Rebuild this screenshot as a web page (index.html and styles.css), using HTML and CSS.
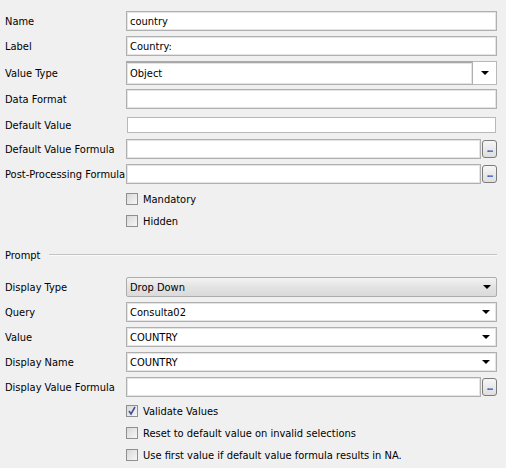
FILE: index.html
```html
<!DOCTYPE html>
<html lang="en">
<head>
  <meta charset="UTF-8">
  <title>Parameter</title>
  <link rel="stylesheet" href="styles.css">
</head>
<body>
  <div class="panel">
    <div class="row r-name">
      <span class="lbl">Name</span>
      <div class="field"><span class="txt">country</span></div>
    </div>
    <div class="row r-label">
      <span class="lbl">Label</span>
      <div class="field"><span class="txt">Country:</span></div>
    </div>
    <div class="row r-type">
      <span class="lbl">Value Type</span>
      <div class="combo">
        <div class="combo-text"><span class="txt">Object</span></div>
        <div class="combo-btn"><span class="arrow"></span></div>
      </div>
    </div>
    <div class="row r-format">
      <span class="lbl">Data Format</span>
      <div class="field"></div>
    </div>
    <div class="row r-default">
      <span class="lbl">Default Value</span>
      <div class="field thin"></div>
    </div>
    <div class="row r-formula">
      <span class="lbl">Default Value Formula</span>
      <div class="field"></div>
      <button class="dots">...</button>
    </div>
    <div class="row r-post">
      <span class="lbl">Post-Processing Formula</span>
      <div class="field"></div>
      <button class="dots">...</button>
    </div>
    <div class="row check r-mand">
      <span class="lbl"></span>
      <span class="box"></span><span class="ctext">Mandatory</span>
    </div>
    <div class="row check">
      <span class="lbl"></span>
      <span class="box"></span><span class="ctext">Hidden</span>
    </div>

    <div class="row section">
      <span class="sec-title">Prompt</span>
      <span class="sec-line"></span>
    </div>

    <div class="row r-display">
      <span class="lbl">Display Type</span>
      <div class="dropdown"><span class="txt">Drop Down</span><span class="arrow"></span></div>
    </div>
    <div class="row r-list">
      <span class="lbl">Query</span>
      <div class="field select"><span class="txt">Consulta02</span><span class="arrow"></span></div>
    </div>
    <div class="row r-list">
      <span class="lbl">Value</span>
      <div class="field select"><span class="txt">COUNTRY</span><span class="arrow"></span></div>
    </div>
    <div class="row r-list">
      <span class="lbl">Display Name</span>
      <div class="field select"><span class="txt">COUNTRY</span><span class="arrow"></span></div>
    </div>
    <div class="row r-list">
      <span class="lbl">Display Value Formula</span>
      <div class="field"></div>
      <button class="dots">...</button>
    </div>
    <div class="row check r-valid">
      <span class="lbl"></span>
      <span class="box checked">
        <svg width="10" height="10" viewBox="0 0 10 10"><path d="M2 5 L4 8 L8 1" fill="none" stroke="#3f4f9a" stroke-width="1.6"/></svg>
      </span><span class="ctext">Validate Values</span>
    </div>
    <div class="row check">
      <span class="lbl"></span>
      <span class="box"></span><span class="ctext">Reset to default value on invalid selections</span>
    </div>
    <div class="row check">
      <span class="lbl"></span>
      <span class="box"></span><span class="ctext">Use first value if default value formula results in NA.</span>
    </div>
  </div>
</body>
</html>
```

FILE: styles.css
```css
html, body {
  margin: 0;
  padding: 0;
  background: #f0f0f0;
}
body {
  font-family: "DejaVu Sans Condensed", "DejaVu Sans", sans-serif;
  font-stretch: condensed;
  font-size: 11px;
  color: #000;
}
.panel {
  width: 506px;
  height: 468px;
  padding-top: 11px;
  box-sizing: border-box;
}
.row {
  display: flex;
  align-items: center;
  height: 20px;
  margin-bottom: 5px;
  padding-left: 5px;
  white-space: nowrap;
}
.lbl {
  width: 121px;
  flex: none;
}
.field {
  width: 371px;
  height: 20px;
  box-sizing: border-box;
  background: #fff;
  border: 1px solid #b0b0b0;
  box-shadow: inset 0 0 0 1px #e4e4e4;
  display: flex;
  align-items: center;
}
.txt {
  padding-left: 3px;
}
.r-type {
  height: 24px;
  margin-bottom: 4px;
}
.r-default {
  height: 16px;
  margin-top: 8px;
  margin-bottom: 6px;
}
.field.thin {
  height: 16px;
  width: 369px;
  margin-left: 1px;
  box-shadow: none;
  border-color: #b8b8b8;
}
.combo {
  width: 371px;
  height: 24px;
  display: flex;
}
.combo-text {
  flex: 1;
  background: #fff;
  border: 1px solid #b0b0b0;
  border-top: 2px solid #a8a8a8;
  box-shadow: inset 0 0 0 1px #e4e4e4;
  display: flex;
  align-items: center;
}
.combo-btn {
  width: 23px;
  background: #fff;
  border: 1px solid #b8b8b8;
  border-left: none;
  display: flex;
  align-items: center;
  justify-content: center;
}
.arrow {
  width: 0;
  height: 0;
  border-left: 4px solid transparent;
  border-right: 4px solid transparent;
  border-top: 4px solid #000;
  flex: none;
}
.r-formula .field, .r-post .field, .r-list .field {
  width: 355px;
}
.r-list .field.select {
  width: 371px;
  justify-content: space-between;
}
.field.select .arrow {
  margin-right: 6px;
}
.dots {
  width: 15px;
  height: 18px;
  margin-left: 1px;
  padding: 0 0 3px 0;
  box-sizing: border-box;
  border: 1px solid #7a7a7a;
  border-radius: 3px;
  background: linear-gradient(#f6f6f6, #dedede);
  font-family: "Liberation Sans", Arial, sans-serif;
  font-size: 10px;
  font-weight: bold;
  color: #4848b0;
  line-height: 10px;
  display: flex;
  align-items: flex-end;
  justify-content: center;
  letter-spacing: -1px;
}
.check {
  height: 22px;
  margin-bottom: 0;
}
.r-mand {
  margin-top: -1px;
}
.box {
  width: 12px;
  height: 12px;
  box-sizing: border-box;
  border: 1px solid #8e8f8f;
  background: linear-gradient(135deg, #d8d8d8, #f6f6f6);
  flex: none;
  display: flex;
  align-items: center;
  justify-content: center;
}
.ctext {
  margin-left: 5px;
}
.section {
  margin-top: 13px;
  margin-bottom: 12px;
}
.sec-title {
  flex: none;
}
.sec-line {
  flex: 1;
  height: 1px;
  background: #c4c4c4;
  margin-left: 9px;
  margin-right: 9px;
  border-bottom: 1px solid #fafafa;
}
.dropdown {
  width: 371px;
  height: 20px;
  box-sizing: border-box;
  border: 1px solid #acacac;
  border-radius: 2px;
  background: linear-gradient(#f3f3f3, #e3e3e3 50%, #dadada);
  display: flex;
  align-items: center;
  justify-content: space-between;
}
.dropdown .arrow {
  margin-right: 5px;
}
.r-valid {
  margin-top: -2px;
}
```
